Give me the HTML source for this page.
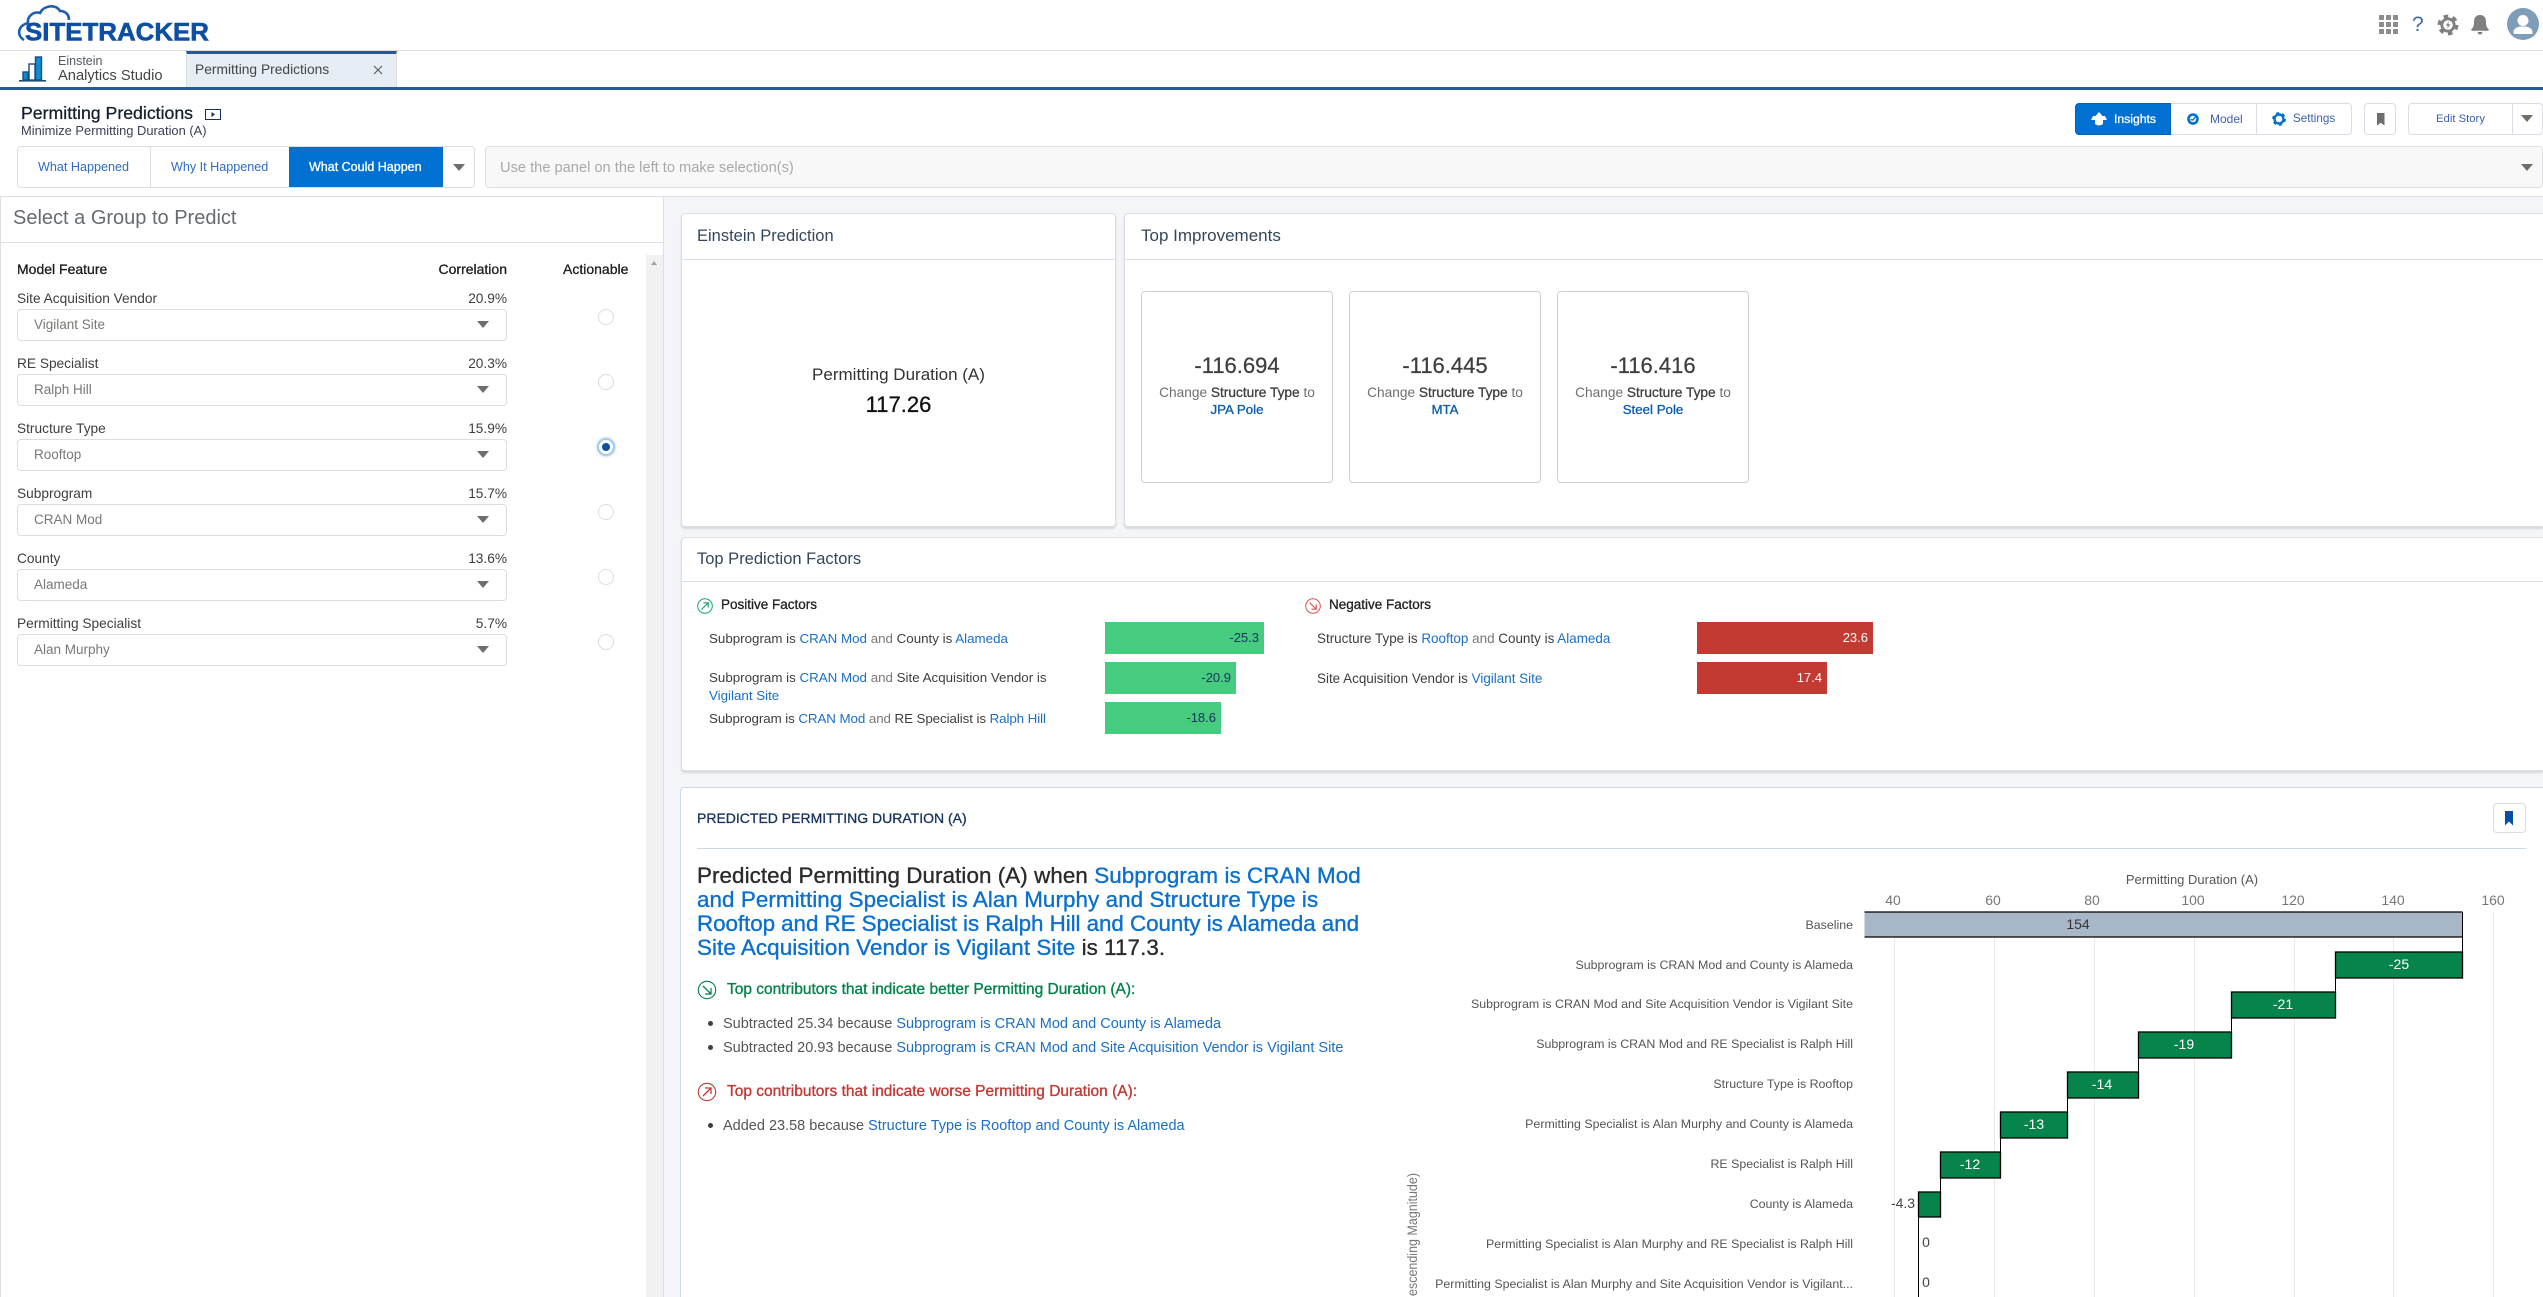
<!DOCTYPE html>
<html lang="en"><head><meta charset="utf-8"><title>Permitting Predictions</title>
<style>
*{box-sizing:border-box}
html,body{margin:0;padding:0;background:#fff;width:2543px;height:1297px;overflow:hidden}
body{font-family:"Liberation Sans",sans-serif;font-size:14px;color:#333;line-height:20px}
#p{position:relative;width:2543px;height:1297px;overflow:hidden}
.a{position:absolute}
.t{position:absolute;white-space:nowrap;line-height:20px}
.m{-webkit-text-stroke:.3px currentColor}
.car{position:absolute;width:0;height:0;border-left:6px solid transparent;border-right:6px solid transparent;border-top:7.5px solid #706e6b}
.card{position:absolute;background:#fff;border:1px solid #dcdfe3;border-radius:4px;box-shadow:0 2px 2px rgba(0,0,0,.12)}
.sel{position:absolute;left:17px;width:490px;height:32px;border:1px solid #d8dde6;border-radius:4px;background:#fff}
.radio{position:absolute;left:598px;width:16px;height:16px;border:1px solid #d8dde6;border-radius:50%;background:#fff}
.lab{color:#3e3e3c;font-size:13.700px;margin-top:.5px}
.val{color:#7a7875;font-size:13.500px;margin-top:.5px}
a,.l{color:#1a6fc4;text-decoration:none}
.imp{position:absolute;top:291px;width:192px;height:192px;border:1px solid #cdcdcd;border-radius:4px;background:#fff;text-align:center}
.imp .n{position:absolute;left:0;right:0;top:63px;font-size:22px;line-height:22px;color:#3e3e3c;-webkit-text-stroke:.25px #3e3e3c}
.imp .d{position:absolute;left:0;right:0;top:91px;color:#706e6b;font-size:13.700px;line-height:20px}
.imp .d b{font-weight:400;color:#3e3e3c;-webkit-text-stroke:.3px #3e3e3c}
.imp .e{position:absolute;left:0;right:0;top:108px;color:#0b5cab;font-size:13.300px;line-height:20px;-webkit-text-stroke:.3px #0b5cab}
.btn{position:absolute;top:103px;height:32px;background:#fff;border:1px solid #d8dde6}
.fac{position:absolute;font-size:13.350px;color:#3e3e3c;white-space:nowrap;line-height:20px}
.fac i{font-style:normal;color:#7a7875}
.neg{font-size:13.450px}
.li{font-size:14.500px;color:#555;margin-top:.5px}
.bar{position:absolute;height:32px;text-align:right;padding-right:5px;line-height:31px;font-size:13px}
.chart text{font-family:"Liberation Sans",sans-serif}
.ttl{position:absolute;white-space:nowrap;line-height:20px;font-size:16.500px;color:#33475b}
</style></head><body><div id="p">

<!-- global header -->
<svg class="a" style="left:0;top:0" width="240" height="50" viewBox="0 0 240 50">
<path d="M24 40 C17 36 17 26 28 23 C27 16 34 11 40 13 C44 5 56 4 60 11 C65 11 69 14 69 20" fill="none" stroke="#1d5eab" stroke-width="2.600"/>
<text x="25" y="40.500" font-family="Liberation Sans" font-weight="700" font-size="25" fill="#0e4fa2" stroke="#0e4fa2" stroke-width=".6" textLength="184" lengthAdjust="spacingAndGlyphs">SITETRACKER</text>
</svg>
<div class="a" style="left:0;top:50px;width:2543px;height:1px;background:#dcdcdc"></div>

<svg class="a" style="left:2379px;top:15px" width="19" height="19"><g fill="#8c8c8c"><rect width="5" height="5" rx=".6"/><rect x="7" width="5" height="5" rx=".6"/><rect x="14" width="5" height="5" rx=".6"/><rect y="7" width="5" height="5" rx=".6"/><rect x="7" y="7" width="5" height="5" rx=".6"/><rect x="14" y="7" width="5" height="5" rx=".6"/><rect y="14" width="5" height="5" rx=".6"/><rect x="7" y="14" width="5" height="5" rx=".6"/><rect x="14" y="14" width="5" height="5" rx=".6"/></g></svg>
<div class="t" style="left:2412px;top:14px;font-size:21px;line-height:22px;color:#3d6a9e">?</div>
<svg class="a" style="left:2437px;top:14px" width="22" height="22" viewBox="-11 -11 22 22"><circle r="7.600" fill="#808080"/><circle r="8.800" fill="none" stroke="#808080" stroke-width="3.400" stroke-dasharray="4.600 4.600"/><circle r="4.800" fill="#fff"/><path d="M1.200 -4 L-2.200 .8 H0 L-1 4 L2.400 -.8 H.2 Z" fill="#808080"/></svg>
<svg class="a" style="left:2470px;top:15px" width="20" height="20" viewBox="0 0 20 20"><path d="M10 0 C6 0 4 3 4 6.500 C4 10.500 3.500 12.500 1.500 14 Q.8 15.600 2 15.800 H18 Q19.200 15.600 18.500 14 C16.500 12.500 16 10.500 16 6.500 C16 3 14 0 10 0 Z M7.500 17 H12.500 Q12 19.600 10 19.600 Q8 19.600 7.500 17 Z" fill="#808080"/></svg>
<svg class="a" style="left:2507px;top:8px" width="32" height="32" viewBox="0 0 32 32"><circle cx="16" cy="16" r="16" fill="#7f9cb8"/><circle cx="16" cy="12.500" r="5.500" fill="#fff"/><path d="M6.500 24 C6.500 20.500 10 19.500 12.500 18.500 H19.500 C22 19.500 25.500 20.500 25.500 24 V25 Q25.500 26 24.500 26 H7.500 Q6.500 26 6.500 25 Z" fill="#fff"/></svg>

<!-- tab bar -->
<svg class="a" style="left:19px;top:56px" width="27" height="26" viewBox="0 0 27 26"><g stroke="#1b4a7d" stroke-width="1.400"><rect x="4" y="16" width="5" height="8" fill="#0a8fd4"/><rect x="10" y="8" width="6" height="16" fill="#fff"/><rect x="16.500" y="1" width="6" height="23" fill="#0a8fd4"/></g><rect x="0" y="24" width="27" height="1.600" fill="#1b4a7d"/></svg>
<div class="t" style="left:58px;top:51px;font-size:12.500px;color:#54585e">Einstein</div>
<div class="t" style="left:58px;top:66px;font-size:14.700px;color:#444">Analytics Studio</div>
<div class="a" style="left:186px;top:51px;width:211px;height:36px;background:#e7edf5;border-top:3px solid #1f5b9e;border-right:1px solid #d8dde6;border-left:1px solid #d8dde6"></div>
<div class="t" style="left:195px;top:60px;font-size:13.800px;color:#444">Permitting Predictions</div>
<svg class="a" style="left:373px;top:65px" width="10" height="10"><path d="M1 1 L9 9 M9 1 L1 9" stroke="#555" stroke-width="1"/></svg>
<div class="a" style="left:0;top:87px;width:2543px;height:3px;background:#1f5b9e"></div>

<!-- story header -->
<div class="t m" style="left:21px;top:103px;font-size:17.700px;color:#16202c">Permitting Predictions</div>
<svg class="a" style="left:205px;top:109px" width="16" height="11"><rect x=".5" y=".5" width="15" height="10" fill="#fff" stroke="#16325c"/><path d="M6.500 3 L10 5.500 L6.500 8 Z" fill="#16325c"/></svg>
<div class="t" style="left:21px;top:121px;font-size:12.900px;color:#3c3f55">Minimize Permitting Duration (A)</div>

<div class="a" style="left:17px;top:146px;width:458px;height:42px;border:1px solid #d8dde6;border-radius:4px;background:#fff"></div>
<div class="a" style="left:150px;top:146px;width:1px;height:42px;background:#d8dde6"></div>
<div class="a" style="left:289px;top:147px;width:154px;height:40px;background:#0070d2"></div>
<div class="t" style="left:38px;top:157px;font-size:12.600px;color:#2f6bc4">What Happened</div>
<div class="t" style="left:171px;top:157px;font-size:12.600px;color:#2f6bc4">Why It Happened</div>
<div class="t m" style="left:309px;top:157px;font-size:12.500px;color:#fff">What Could Happen</div>
<div class="car" style="left:453px;top:164px"></div>

<div class="a" style="left:485px;top:146px;width:2058px;height:42px;border:1px solid #dde1e7;border-radius:4px;background:#f8f8f8"></div>
<div class="t" style="left:500px;top:158px;font-size:14.650px;color:#a9a9a9">Use the panel on the left to make selection(s)</div>
<div class="car" style="left:2521px;top:164px"></div>

<!-- toolbar -->
<div class="btn" style="left:2075px;width:96px;background:#0070d2;border-color:#0062b8;border-radius:4px 0 0 4px"></div>
<svg class="a" style="left:2091px;top:111px" width="16" height="16" viewBox="0 0 16 16"><path d="M8 1 L11.500 5 H14 L16 9 H12 V13 Q8 16 4 13 V9 H0 L2 5 H4.500 Z" fill="#fff"/></svg>
<div class="t m" style="left:2114px;top:109px;font-size:12.200px;color:#fff">Insights</div>
<div class="btn" style="left:2171px;width:86px;border-left:0"></div>
<svg class="a" style="left:2187px;top:113px" width="12" height="12" viewBox="0 0 12 12"><circle cx="6" cy="6" r="4.500" fill="#fff" stroke="#0070d2" stroke-width="2.600"/><path d="M3.500 6.500 L6 7 L8.500 3.500" stroke="#0070d2" stroke-width="1.400" fill="none"/></svg>
<div class="t" style="left:2210px;top:109px;font-size:12px;color:#3f5fae">Model</div>
<div class="btn" style="left:2256px;width:96px;border-radius:0 4px 4px 0"></div>
<svg class="a" style="left:2272px;top:112px" width="14" height="14" viewBox="-7 -7 14 14"><circle r="4.500" fill="none" stroke="#0070d2" stroke-width="2.400"/><circle r="5.800" fill="none" stroke="#0070d2" stroke-width="2.200" stroke-dasharray="3 3.070"/></svg>
<div class="t" style="left:2293px;top:109px;font-size:11.700px;color:#3f5fae">Settings</div>
<div class="btn" style="left:2364px;width:32px;border-radius:4px"></div>
<svg class="a" style="left:2377px;top:113px" width="8" height="13"><path d="M0 0 H7.500 V12.500 L3.750 9.800 L0 12.500 Z" fill="#706e6b"/></svg>
<div class="btn" style="left:2408px;width:135px;border-radius:4px"></div>
<div class="a" style="left:2512px;top:103px;width:1px;height:32px;background:#d8dde6"></div>
<div class="t" style="left:2436px;top:109px;font-size:11.300px;color:#3f5fae">Edit Story</div>
<div class="car" style="left:2521px;top:115px"></div>

<!-- content background -->
<div class="a" style="left:0;top:196px;width:2543px;height:1101px;background:#f3f5f9;border-top:1px solid #dcdfe3"></div>

<!-- left panel -->
<div class="a" style="left:0;top:197px;width:664px;height:1100px;background:#fff;border-right:1px solid #dcdfe3;border-left:1px solid #dcdfe3"></div>
<div class="a" style="left:0;top:242px;width:664px;height:1px;background:#dcdfe3"></div>
<div class="t" style="left:13px;top:208px;font-size:20px;color:#666b72">Select a Group to Predict</div>
<div class="a" style="left:646px;top:255px;width:17px;height:1042px;background:#f1f1f1"></div>
<div class="a" style="left:651px;top:261px;width:0;height:0;border-left:3.500px solid transparent;border-right:3.500px solid transparent;border-bottom:4px solid #a3a3a3"></div>
<div class="t m" style="left:17px;top:259px;font-size:14px;color:#1c1c1c">Model Feature</div>
<div class="t m" style="right:2036px;top:259px;font-size:14px;color:#1c1c1c">Correlation</div>
<div class="t m" style="left:563px;top:259px;font-size:14px;color:#1c1c1c">Actionable</div>

<div class="t lab" style="left:17px;top:288px">Site Acquisition Vendor</div><div class="t lab" style="right:2036px;top:288px">20.9%</div>
<div class="sel" style="top:309px"></div><div class="t val" style="left:34px;top:314px">Vigilant Site</div><div class="car" style="left:477px;top:321px"></div><div class="radio" style="top:309px"></div>

<div class="t lab" style="left:17px;top:353px">RE Specialist</div><div class="t lab" style="right:2036px;top:353px">20.3%</div>
<div class="sel" style="top:374px"></div><div class="t val" style="left:34px;top:379px">Ralph Hill</div><div class="car" style="left:477px;top:386px"></div><div class="radio" style="top:374px"></div>

<div class="t lab" style="left:17px;top:418px">Structure Type</div><div class="t lab" style="right:2036px;top:418px">15.9%</div>
<div class="sel" style="top:439px"></div><div class="t val" style="left:34px;top:444px">Rooftop</div><div class="car" style="left:477px;top:451px"></div>
<div class="radio" style="top:439px;box-shadow:0 0 3px #0070d2;border-color:#a9c6e8"></div><div class="a" style="left:602px;top:443px;width:8px;height:8px;border-radius:50%;background:#0b4fa5"></div>

<div class="t lab" style="left:17px;top:483px">Subprogram</div><div class="t lab" style="right:2036px;top:483px">15.7%</div>
<div class="sel" style="top:504px"></div><div class="t val" style="left:34px;top:509px">CRAN Mod</div><div class="car" style="left:477px;top:516px"></div><div class="radio" style="top:504px"></div>

<div class="t lab" style="left:17px;top:548px">County</div><div class="t lab" style="right:2036px;top:548px">13.6%</div>
<div class="sel" style="top:569px"></div><div class="t val" style="left:34px;top:574px">Alameda</div><div class="car" style="left:477px;top:581px"></div><div class="radio" style="top:569px"></div>

<div class="t lab" style="left:17px;top:613px">Permitting Specialist</div><div class="t lab" style="right:2036px;top:613px">5.7%</div>
<div class="sel" style="top:634px"></div><div class="t val" style="left:34px;top:639px">Alan Murphy</div><div class="car" style="left:477px;top:646px"></div><div class="radio" style="top:634px"></div>

<!-- Einstein prediction -->
<div class="card" style="left:681px;top:213px;width:435px;height:314px"></div>
<div class="a" style="left:681px;top:259px;width:435px;height:1px;background:#dcdfe3"></div>
<div class="ttl" style="left:697px;top:226px">Einstein Prediction</div>
<div class="t" style="left:681px;width:435px;text-align:center;top:365px;font-size:17px;color:#333">Permitting Duration (A)</div>
<div class="t m" style="left:681px;width:435px;text-align:center;top:395px;font-size:22px;color:#111">117.26</div>

<!-- Top improvements -->
<div class="card" style="left:1124px;top:213px;width:1419px;height:314px;border-right:0;border-radius:4px 0 0 4px"></div>
<div class="a" style="left:1124px;top:259px;width:1419px;height:1px;background:#dcdfe3"></div>
<div class="ttl" style="left:1141px;top:226px;font-size:17px">Top Improvements</div>
<div class="imp" style="left:1141px"><div class="n">-116.694</div><div class="d">Change <b>Structure Type</b> to</div><div class="e">JPA Pole</div></div>
<div class="imp" style="left:1349px"><div class="n">-116.445</div><div class="d">Change <b>Structure Type</b> to</div><div class="e">MTA</div></div>
<div class="imp" style="left:1557px"><div class="n">-116.416</div><div class="d">Change <b>Structure Type</b> to</div><div class="e">Steel Pole</div></div>

<!-- Top prediction factors -->
<div class="card" style="left:681px;top:537px;width:1862px;height:234px;border-right:0;border-radius:4px 0 0 4px"></div>
<div class="a" style="left:681px;top:581px;width:1862px;height:1px;background:#dcdfe3"></div>
<div class="ttl" style="left:697px;top:549px">Top Prediction Factors</div>

<svg class="a" style="left:697px;top:598px" width="16" height="16" viewBox="0 0 16 16"><circle cx="8" cy="8" r="7.300" fill="none" stroke="#12a567"/><path d="M4.500 11.500 L11 5 M6.500 4.800 H11.200 V9.500" fill="none" stroke="#12a567" stroke-width="1.200"/></svg>
<div class="t m" style="left:721px;top:595px;font-size:13.500px;color:#222">Positive Factors</div>
<div class="fac" style="left:709px;top:629px">Subprogram is <a>CRAN Mod</a> <i>and</i> County is <a>Alameda</a></div>
<div class="fac" style="left:709px;top:668px">Subprogram is <a>CRAN Mod</a> <i>and</i> Site Acquisition Vendor is</div>
<div class="fac" style="left:709px;top:686px"><a>Vigilant Site</a></div>
<div class="fac" style="left:709px;top:709px;letter-spacing:-.08px">Subprogram is <a>CRAN Mod</a> <i>and</i> RE Specialist is <a>Ralph Hill</a></div>
<div class="bar" style="left:1105px;top:622px;width:159px;background:#45cc7f;color:#16325c">-25.3</div>
<div class="bar" style="left:1105px;top:662px;width:131px;background:#45cc7f;color:#16325c">-20.9</div>
<div class="bar" style="left:1105px;top:702px;width:116px;background:#45cc7f;color:#16325c">-18.6</div>

<svg class="a" style="left:1305px;top:598px" width="16" height="16" viewBox="0 0 16 16"><circle cx="8" cy="8" r="7.300" fill="none" stroke="#d9534f"/><path d="M4.500 4.500 L11 11 M11.200 6.500 V11.200 H6.500" fill="none" stroke="#d9534f" stroke-width="1.200"/></svg>
<div class="t m" style="left:1329px;top:595px;font-size:13.500px;color:#222">Negative Factors</div>
<div class="fac neg" style="left:1317px;top:629px">Structure Type is <a>Rooftop</a> <i>and</i> County is <a>Alameda</a></div>
<div class="fac neg" style="left:1317px;top:669px">Site Acquisition Vendor is <a>Vigilant Site</a></div>
<div class="bar" style="left:1697px;top:622px;width:176px;background:#c23a31;color:#fff">23.6</div>
<div class="bar" style="left:1697px;top:662px;width:130px;background:#c23a31;color:#fff">17.4</div>

<!-- Predicted card -->
<div class="a" style="left:680px;top:787px;width:1863px;height:510px;background:#fff;border:1px solid #cfdbe8;border-right:0;border-bottom:0;border-radius:4px 0 0 0"></div>
<div class="t m" style="left:697px;top:808px;font-size:14px;color:#16325c">PREDICTED PERMITTING DURATION (A)</div>
<div class="a" style="left:2493px;top:803px;width:33px;height:30px;border:1px solid #d8dde6;border-radius:4px;background:#fff"></div>
<svg class="a" style="left:2505px;top:811px" width="9" height="15"><path d="M0 0 H8 V14.500 L4 10.500 L0 14.500 Z" fill="#0b4fa5"/></svg>
<div class="a" style="left:697px;top:848px;width:1829px;height:1px;background:#c9d7e6"></div>

<div class="a" style="left:697px;top:864px;font-size:22.400px;line-height:24px;white-space:nowrap;color:#2b2b2b;letter-spacing:.07px;-webkit-text-stroke:.35px currentColor">Predicted Permitting Duration (A) when <span style="color:#0a6fcf">Subprogram is CRAN Mod<br>and Permitting Specialist is Alan Murphy and Structure Type is<br><span style="letter-spacing:-.06px">Rooftop and RE Specialist is Ralph Hill and County is Alameda and</span><br>Site Acquisition Vendor is Vigilant Site</span> is 117.3.</div>

<svg class="a" style="left:697px;top:980px" width="20" height="20" viewBox="0 0 20 20"><circle cx="10" cy="10" r="8.700" fill="none" stroke="#04844b" stroke-width="1.100"/><path d="M6 6 L14 14 M14 8 V14 H8" fill="none" stroke="#04844b" stroke-width="1.300"/></svg>
<div class="t" style="left:727px;top:980px;font-size:15.500px;color:#04844b;-webkit-text-stroke:.35px #04844b">Top contributors that indicate better Permitting Duration (A):</div>
<div class="a" style="left:708px;top:1021px;width:5px;height:5px;border-radius:50%;background:#3e3e3c"></div>
<div class="fac li" style="left:723px;top:1013px">Subtracted 25.34 because <a>Subprogram is CRAN Mod and County is Alameda</a></div>
<div class="a" style="left:708px;top:1045px;width:5px;height:5px;border-radius:50%;background:#3e3e3c"></div>
<div class="fac li" style="left:723px;top:1037px">Subtracted 20.93 because <a>Subprogram is CRAN Mod and Site Acquisition Vendor is Vigilant Site</a></div>

<svg class="a" style="left:697px;top:1082px" width="20" height="20" viewBox="0 0 20 20"><circle cx="10" cy="10" r="8.700" fill="none" stroke="#c23934" stroke-width="1.100"/><path d="M6 14 L14 6 M8 6 H14 V12" fill="none" stroke="#c23934" stroke-width="1.300"/></svg>
<div class="t" style="left:727px;top:1082px;font-size:15.500px;color:#c23934;-webkit-text-stroke:.35px #c23934">Top contributors that indicate worse Permitting Duration (A):</div>
<div class="a" style="left:708px;top:1123px;width:5px;height:5px;border-radius:50%;background:#3e3e3c"></div>
<div class="fac li" style="left:723px;top:1115px">Added 23.58 because <a>Structure Type is Rooftop and County is Alameda</a></div>

<!-- Chart -->
<svg class="a chart" style="left:0;top:0;pointer-events:none" width="2543" height="1297" viewBox="0 0 2543 1297">
<g stroke="#e6e9ee" stroke-width="1"><path d="M1894.500 912V1297M1994.500 912V1297M2094.500 912V1297M2194.500 912V1297M2294.500 912V1297M2393.500 912V1297M2493.500 912V1297"/></g>
<text x="2192" y="884" text-anchor="middle" font-size="13" fill="#555">Permitting Duration (A)</text>
<g font-size="14" fill="#777" text-anchor="middle"><text x="1893" y="905">40</text><text x="1993" y="905">60</text><text x="2092" y="905">80</text><text x="2193" y="905">100</text><text x="2293" y="905">120</text><text x="2393" y="905">140</text><text x="2493" y="905">160</text></g>
<text transform="translate(1417 1296) rotate(-90)" font-size="13.500" fill="#777" textLength="123" lengthAdjust="spacingAndGlyphs">escending Magnitude)</text>
<g stroke="#000" stroke-width="1.300">
<rect x="1864.500" y="912" width="597.500" height="25" fill="#a8b7c8" stroke="none"/>
<path d="M1864.500 912H2462.500M1864.500 937H2462.500" fill="none"/>
<path d="M2462.500 912V952M2335.500 978V992M2231.500 1018V1032M2138.500 1058V1072M2067.500 1098V1112M2000.500 1138V1152M1940.500 1178V1192M1918.500 1217V1297" fill="none" stroke-width="1"/>
<g fill="#07844c">
<rect x="2335.500" y="952" width="127" height="26"/>
<rect x="2231.500" y="992" width="104" height="26"/>
<rect x="2138.500" y="1032" width="93" height="26"/>
<rect x="2067.500" y="1072" width="71" height="26"/>
<rect x="2000.500" y="1112" width="67" height="26"/>
<rect x="1940.500" y="1152" width="60" height="26"/>
<rect x="1918.500" y="1192" width="22" height="25"/>
</g></g>
<g font-size="12.400" text-anchor="end" fill="#555"><text x="1853" y="929">Baseline</text>
<text x="1853" y="969">Subprogram is CRAN Mod and County is Alameda</text>
<text x="1853" y="1008">Subprogram is CRAN Mod and Site Acquisition Vendor is Vigilant Site</text>
<text x="1853" y="1048">Subprogram is CRAN Mod and RE Specialist is Ralph Hill</text>
<text x="1853" y="1088">Structure Type is Rooftop</text>
<text x="1853" y="1128">Permitting Specialist is Alan Murphy and County is Alameda</text>
<text x="1853" y="1168">RE Specialist is Ralph Hill</text>
<text x="1853" y="1208">County is Alameda</text>
<text x="1853" y="1248">Permitting Specialist is Alan Murphy and RE Specialist is Ralph Hill</text>
<text x="1853" y="1288">Permitting Specialist is Alan Murphy and Site Acquisition Vendor is Vigilant...</text></g>
<g font-size="14" text-anchor="middle"><text x="2078" y="929" fill="#333">154</text>
<g fill="#fff"><text x="2399" y="969">-25</text><text x="2283" y="1009">-21</text><text x="2184" y="1049">-19</text><text x="2102" y="1089">-14</text><text x="2034" y="1129">-13</text><text x="1970" y="1169">-12</text></g>
<text x="1903" y="1208" fill="#444">-4.3</text><text x="1926" y="1247" fill="#444">0</text><text x="1926" y="1287" fill="#444">0</text></g>
</svg>
</div></body></html>
